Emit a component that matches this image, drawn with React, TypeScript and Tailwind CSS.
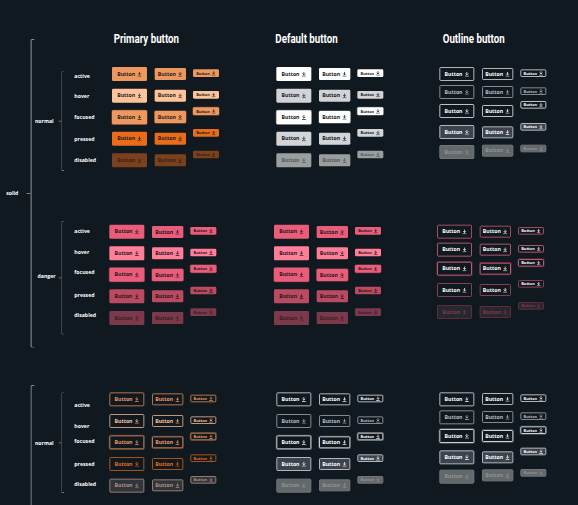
import React from "react";
import { clsx } from "clsx";

type Size = "lg" | "md" | "sm";

const HEIGHT: Record<Size, number> = { lg: 42, md: 36, sm: 23 };

const sizeClass: Record<Size, string> = {
  lg: "h-[42px] w-[105px] gap-[7px] rounded-[4px] text-[15.5px]",
  md: "h-[36px] w-[94px] gap-[7px] rounded-[4px] text-[15.5px]",
  sm: "h-[23px] w-[78px] gap-[6px] rounded-[4px] text-[11.8px]",
};

const iconClass: Record<Size, string> = {
  lg: "h-[15px] w-[13px]",
  md: "h-[15px] w-[13px]",
  sm: "h-[14px] w-[12px]",
};

// Variants are listed in the order active, hover, focused, pressed, disabled.
const solidPrimary = [
  "bg-[#ee985f] text-[#1b1c1f]",
  "bg-[#ffc39b] text-[#1b1c1f]",
  "bg-[#ee985f] text-[#1b1c1f] ring-2 ring-[#6b4731]",
  "bg-[#e86c1a] text-[#1b1c1f]",
  "bg-[#7b401c] text-[#35241b]",
];
const solidDefault = [
  "bg-white text-[#101920]",
  "bg-[#d2d3d6] text-[#101920]",
  "bg-white text-[#101920] ring-2 ring-[#50575c]",
  "bg-[#d3d4d7] text-[#101920]",
  "bg-[#9a9e9f] text-[#54595c]",
];
const outlineLight = [
  "border-[3px] border-[#b4b8bc] text-white",
  "border-[3px] border-[#878c91] text-[#b9bcc0]",
  "border-[3px] border-[#c0c4c7] text-white",
  "border-[3px] border-[#b4b8be] bg-[#3c434d] text-white",
  "border-[3px] border-[#73777a] bg-[#63686b] text-[#8f9395]",
];
const outlineLightRing = [
  "border-[3px] border-[#b4b8bc] text-white",
  "border-[3px] border-[#878c91] text-[#b9bcc0]",
  "border-[3px] border-[#d0d3d6] text-white ring-2 ring-[#50565c]",
  "border-[3px] border-[#b4b8be] bg-[#3c434d] text-white",
  "border-[3px] border-[#73777a] bg-[#63686b] text-[#8f9395]",
];
const solidDanger = [
  "bg-[#ea5d7a] text-[#1f1720]",
  "bg-[#ff7f99] text-[#1f1720]",
  "bg-[#ea5d7a] text-[#1f1720] ring-2 ring-[#653342]",
  "bg-[#ba4a60] text-[#1f1720]",
  "bg-[#7c394b] text-[#351f2a]",
];
const outlineDanger = [
  "border-[3px] border-[#a84a60] text-white",
  "border-[3px] border-[#b35269] text-white",
  "border-[3px] border-[#cc5770] text-white ring-2 ring-[#4a2a36]",
  "border-[3px] border-[#8c3e51] text-white",
  "border-[3px] border-[#652c3b] bg-[#242931] text-[#8b3344]",
];
const outlinePrimary = [
  "border-[3px] border-[#b3754c] text-[#ee985f]",
  "border-[3px] border-[#c29a80] text-[#ffc39b]",
  "border-[3px] border-[#c98255] text-[#ee985f] ring-2 ring-[#4b3729]",
  "border-[3px] border-[#a9541c] text-[#e86c1a]",
  "border-[3px] border-[#9c7a72] bg-[#2d363d] text-[#bd8a78]",
];

function DownloadIcon({ className }: { className: string }) {
  return (
    <svg viewBox="0 0 13 15" fill="none" stroke="currentColor" strokeWidth="2.2" className={clsx("shrink-0", className)}>
      <path d="M6.5 .5v9M2.2 5.4l4.3 4.3 4.3-4.3M.5 13.5h12" />
    </svg>
  );
}

function Button({ size, tone }: { size: Size; tone: string }) {
  return (
    <button className={clsx("flex shrink-0 items-center justify-center p-0 font-bold leading-none", sizeClass[size], tone)}>
      <span>Button</span>
      <DownloadIcon className={iconClass[size]} />
    </button>
  );
}

// Turns a list of tops into the gaps that separate consecutive items.
function gaps(tops: number[], height: number) {
  return tops.map((top, i) => (i === 0 ? top : top - tops[i - 1] - height));
}

function ButtonColumn({ size, tops, tones }: { size: Size; tops: number[]; tones: string[] }) {
  return (
    <div className="flex flex-col">
      {gaps(tops, HEIGHT[size]).map((gap, i) => (
        <div key={i} style={{ marginTop: gap }}>
          <Button size={size} tone={tones[i]} />
        </div>
      ))}
    </div>
  );
}

type Tops = Record<Size, number[]>;

function Matrix({ tops, tones }: { tops: Tops; tones: string[] }) {
  return (
    <div className="grid w-[321px] shrink-0 grid-cols-[127.5px_115.5px_78px]">
      <ButtonColumn size="lg" tops={tops.lg} tones={tones} />
      <ButtonColumn size="md" tops={tops.md} tones={tones} />
      <ButtonColumn size="sm" tops={tops.sm} tones={tones} />
    </div>
  );
}

const STATES = ["active", "hover", "focused", "pressed", "disabled"];

function StateLabels({ centers }: { centers: number[] }) {
  const tops = centers.map((c) => c - 10);
  return (
    <div className="flex w-[100px] shrink-0 flex-col text-[15.5px] font-bold leading-[20px] text-white">
      {gaps(tops, 20).map((gap, i) => (
        <span key={i} style={{ marginTop: gap }}>
          {STATES[i]}
        </span>
      ))}
    </div>
  );
}

function GroupBracket({ label, className, labelGap }: { label: string; className: string; labelGap: string }) {
  return (
    <div className={clsx("flex w-[118px] shrink-0 items-center justify-end", className)}>
      <span className={clsx("text-[15.5px] font-bold leading-[20px] text-white", labelGap)}>{label}</span>
      <span className="h-[3px] w-[8px] shrink-0 bg-[#666c72]" />
      <span className="h-full w-[9px] shrink-0 rounded-l-[4px] border-y-[3px] border-l-[3px] border-[#747a7f]" />
    </div>
  );
}

const g1: Tops = { lg: [1, 66, 131, 195, 260], md: [4, 69, 133, 198, 263], sm: [8, 73, 122, 187, 252] };
const g1Outline: Tops = { lg: [1, 55, 112, 175, 235], md: [4, 58, 115, 179, 234], sm: [8, 62, 103, 169, 234] };
const g2: Tops = { lg: [14, 79, 143, 208, 273], md: [18, 82, 147, 211, 276], sm: [21, 86, 135, 200, 265] };
const g2Outline: Tops = { lg: [14, 68, 125, 189, 255], md: [17, 71, 128, 192, 258], sm: [21, 75, 117, 180, 246] };
const g3: Tops = { lg: [7, 72, 136, 201, 266], md: [10, 75, 139, 204, 268], sm: [14, 79, 128, 193, 258] };
const g3Outline: Tops = { lg: [7, 61, 117, 181, 239], md: [9, 63, 120, 184, 238], sm: [13, 67, 109, 173, 237] };

function Title({ children, className }: { children: string; className: string }) {
  return (
    <h2
      className={clsx(
        "shrink-0 origin-left scale-x-[0.80] whitespace-nowrap font-['Roboto',sans-serif] text-[36.5px] font-bold leading-[40px] text-white",
        className,
      )}
    >
      {children}
    </h2>
  );
}

export default function App() {
  return (
    <div className="h-[505px] w-[578px] overflow-hidden bg-[#101920]">
      {/* The board is laid out at full size and shown at one third zoom. */}
      <main className="flex h-[1515px] w-[1734px] origin-top-left scale-[0.333333] bg-[#101920] font-['Open_Sans','Noto_Sans',sans-serif]">
        <aside className="flex w-[104px] shrink-0 flex-col pt-[117px]">
          <div className="flex h-[926px] items-center justify-end">
            <span className="text-[15.5px] font-bold leading-[20px] text-white">solid</span>
            <span className="ml-[25px] h-[3px] w-[11px] bg-[#7c8287]" />
            <span className="h-full w-[13px] rounded-l-[5px] border-y-[3px] border-l-[4px] border-[#868b90]" />
          </div>
          <div className="mt-[112px] flex flex-1 justify-end">
            <span className="w-[13px] rounded-tl-[5px] border-l-[4px] border-t-[3px] border-[#868b90]" />
          </div>
        </aside>

        <div className="flex w-[1630px] shrink-0 flex-col">
          <header className="flex h-[200px] shrink-0 pt-[96px]">
            <Title className="ml-[237px] w-[485px]">Primary button</Title>
            <Title className="w-[502px]">Default button</Title>
            <Title className="w-[300px]">Outline button</Title>
          </header>

          <section className="-ml-[29px] flex h-[460px] shrink-0">
            <GroupBracket label="normal" className="mt-[14px] h-[299px]" labelGap="mr-[15px]" />
            <div className="w-[30px] shrink-0" />
            <StateLabels centers={[27, 89, 151, 217, 279]} />
            <div className="ml-[13px] flex">
              <Matrix tops={g1} tones={solidPrimary} />
              <div className="ml-[172px] mr-[168px]">
                <Matrix tops={g1} tones={solidDefault} />
              </div>
              <Matrix tops={g1Outline} tones={outlineLight} />
            </div>
          </section>

          <section className="-ml-[29px] flex h-[510px] shrink-0">
            <GroupBracket label="danger" className="mt-[2px] h-[342px]" labelGap="mr-[9px] pb-[12px]" />
            <div className="w-[30px] shrink-0" />
            <StateLabels centers={[34, 95, 157, 225, 286]} />
            <div className="ml-[5px] flex">
              <Matrix tops={g2} tones={solidDanger} />
              <div className="ml-[173px] mr-[168px]">
                <Matrix tops={g2} tones={solidDanger} />
              </div>
              <Matrix tops={g2Outline} tones={outlineDanger} />
            </div>
          </section>

          <section className="-ml-[29px] flex h-[345px] shrink-0">
            <GroupBracket label="normal" className="mt-[7px] h-[302px]" labelGap="mr-[15px]" />
            <div className="w-[30px] shrink-0" />
            <StateLabels centers={[46, 108, 154, 222, 283]} />
            <div className="ml-[5px] flex">
              <Matrix tops={g3} tones={outlinePrimary} />
              <div className="ml-[180px] mr-[168px]">
                <Matrix tops={g3} tones={outlineLightRing} />
              </div>
              <Matrix tops={g3Outline} tones={outlineLightRing} />
            </div>
          </section>
        </div>
      </main>
    </div>
  );
}
